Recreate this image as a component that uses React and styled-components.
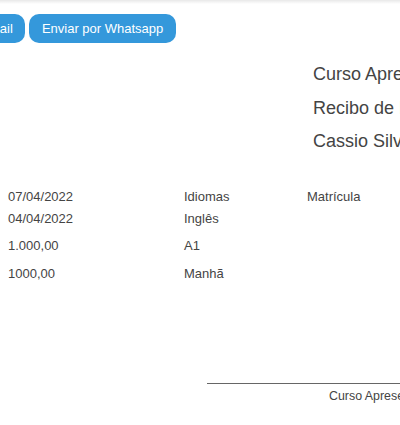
import React from "react";
import styled, { createGlobalStyle } from "styled-components";

const GlobalStyle = createGlobalStyle`
  body {
    margin: 0;
    background: #fff;
    font-family: "Liberation Sans", Arial, sans-serif;
  }
`;

const Page = styled.div`
  width: 400px;
  height: 425px;
  overflow: hidden;
  position: relative;
`;

const TopShadow = styled.div`
  height: 4px;
  background: linear-gradient(rgba(0, 0, 0, 0.09), rgba(0, 0, 0, 0));
`;

const ButtonBar = styled.div`
  display: flex;
  gap: 4px;
  margin-top: 10px;
  margin-left: -95px;
`;

const Button = styled.button`
  height: 29px;
  padding: 0 12.5px;
  border: none;
  border-radius: 10px;
  background-color: #3498db;
  color: #fff;
  font-family: "Liberation Sans", Arial, sans-serif;
  font-size: 13px;
  white-space: nowrap;
  cursor: pointer;
`;

const Header = styled.div`
  margin-top: 15px;
  padding-left: 313px;
`;

const Heading = styled.div`
  font-size: 18px;
  line-height: 33.5px;
  color: #444;
  white-space: nowrap;
`;

const Table = styled.div`
  margin-top: 27px;
  padding-left: 8px;
`;

const Row = styled.div`
  display: grid;
  grid-template-columns: 176px 123px auto;
  line-height: 22px;
  font-size: 13px;
  color: #444;
  padding-bottom: ${(p) => p.$after || 0}px;
  white-space: nowrap;
`;

const Signature = styled.div`
  margin-top: 98px;
  margin-left: 207px;
  border-top: 1px solid #666;
  width: 300px;
`;

const SignatureName = styled.div`
  margin-top: 5px;
  padding-left: 122px;
  font-size: 12.4px;
  line-height: 14px;
  color: #444;
  white-space: nowrap;
`;

const rows = [
  ["07/04/2022", "Idiomas", "Matrícula", 0],
  ["04/04/2022", "Inglês", "", 5],
  ["1.000,00", "A1", "", 6],
  ["1000,00", "Manhã", "", 0],
];

export default function App() {
  return (
    <Page>
      <GlobalStyle />
      <TopShadow />
      <ButtonBar>
        <Button>Enviar por Email</Button>
        <Button>Enviar por Whatsapp</Button>
      </ButtonBar>
      <Header>
        <Heading>Curso Apresentação</Heading>
        <Heading>Recibo de Pagamento</Heading>
        <Heading>Cassio Silva</Heading>
      </Header>
      <Table>
        {rows.map(([a, b, c, after]) => (
          <Row key={a} $after={after}>
            <span>{a}</span>
            <span>{b}</span>
            <span>{c}</span>
          </Row>
        ))}
      </Table>
      <Signature>
        <SignatureName>Curso Apresentação</SignatureName>
      </Signature>
    </Page>
  );
}
